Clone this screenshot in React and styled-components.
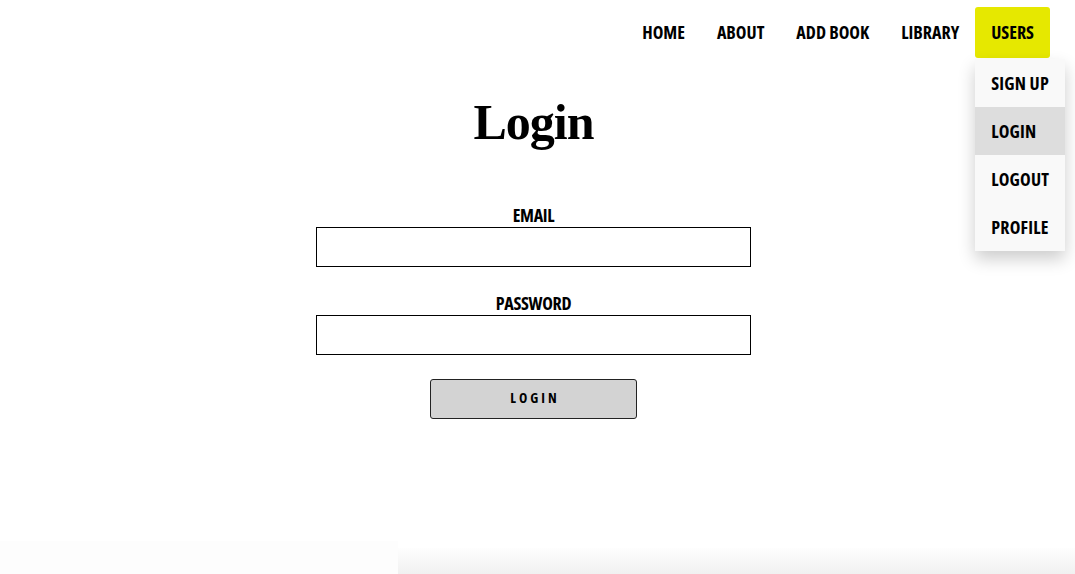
import React from "react";
import styled, { createGlobalStyle } from "styled-components";

const Global = createGlobalStyle`
  html, body { margin: 0; padding: 0; background: #ffffff; }
  body { font-family: "Open Sans", "Liberation Sans", Arial, sans-serif; color: #000; }
  * { box-sizing: border-box; }
`;

const Page = styled.div`
  min-height: 100vh;
  display: flex;
  flex-direction: column;
`;

const NavBar = styled.nav`
  display: flex;
  justify-content: flex-end;
  align-items: flex-start;
  padding: 7px 25px 0 0;
  height: 58px;
`;

const NavLink = styled.a`
  display: block;
  height: 51px;
  line-height: 51px;
  padding: 0 16px;
  font-family: "Open Sans", "Liberation Sans", sans-serif;
  font-stretch: 75%;
  font-weight: 700;
  font-size: 18px;
  letter-spacing: 0;
  color: #000;
  text-decoration: none;
  text-transform: uppercase;
  border-radius: 3px;
  background: ${(p) => (p.$active ? "#e6e800" : "transparent")};
`;

const DropWrap = styled.div`
  position: relative;
`;

const Dropdown = styled.div`
  position: absolute;
  top: 52px;
  left: 0;
  width: 90px;
  background: #f9f9f9;
  box-shadow: 0 8px 16px rgba(0, 0, 0, 0.2);
  z-index: 2;
`;

const DropItem = styled.a`
  display: block;
  height: 48px;
  line-height: 48px;
  padding: 0 16px;
  font-family: "Open Sans", "Liberation Sans", sans-serif;
  font-stretch: 75%;
  font-weight: 700;
  font-size: 18px;
  letter-spacing: 0.2px;
  color: #000;
  text-decoration: none;
  white-space: nowrap;
  background: ${(p) => (p.$hover ? "#dddddd" : "transparent")};
`;

const Main = styled.main`
  flex: 1;
  display: flex;
  flex-direction: column;
  align-items: center;
  padding-right: 8px;
`;

const Title = styled.h1`
  margin: 38px 0 0;
  font-family: "Liberation Serif", "Times New Roman", serif;
  font-weight: 700;
  font-size: 50px;
  line-height: 52px;
  letter-spacing: -1px;
`;

const Form = styled.form`
  display: flex;
  flex-direction: column;
  align-items: center;
  margin-top: 57px;
  width: 435px;
`;

const Field = styled.div`
  display: flex;
  flex-direction: column;
  align-items: center;
  width: 100%;
  margin-bottom: ${(p) => p.$mb}px;
`;

const Label = styled.label`
  font-family: "Open Sans", "Liberation Sans", sans-serif;
  font-stretch: 75%;
  font-weight: 700;
  font-size: 18px;
  letter-spacing: -0.3px;
  line-height: 20px;
  height: 20px;
  margin-bottom: 2px;
`;

const Input = styled.input`
  width: 435px;
  height: 40px;
  border: 1px solid #000;
  border-radius: 0;
  background: #fff;
  padding: 0 8px;
  font-size: 16px;
  outline: none;
`;

const Button = styled.button`
  width: 207px;
  height: 40px;
  background: #d3d3d3;
  border: 1px solid #222;
  border-radius: 3px;
  font-family: "Open Sans", "Liberation Sans", sans-serif;
  font-stretch: 75%;
  font-weight: 700;
  font-size: 14px;
  line-height: 36px;
  letter-spacing: 3px;
  padding: 0 0 2px 3px;
  color: #000;
  cursor: pointer;
`;

const Footer = styled.footer`
  display: flex;
  align-items: flex-end;
  height: 33px;
`;

const FooterLeft = styled.div`
  width: 398px;
  height: 33px;
  background: #fdfdfd;
`;

const FooterRight = styled.div`
  flex: 1;
  height: 26px;
  background: linear-gradient(#fefefe, #f1f1f1);
`;

export default function App() {
  return (
    <Page>
      <Global />
      <NavBar>
        <NavLink href="#">Home</NavLink>
        <NavLink href="#">About</NavLink>
        <NavLink href="#">Add Book</NavLink>
        <NavLink href="#">Library</NavLink>
        <DropWrap>
          <NavLink href="#" $active>Users</NavLink>
          <Dropdown>
            <DropItem href="#">SIGN UP</DropItem>
            <DropItem href="#" $hover>LOGIN</DropItem>
            <DropItem href="#">LOGOUT</DropItem>
            <DropItem href="#">PROFILE</DropItem>
          </Dropdown>
        </DropWrap>
      </NavBar>
      <Main>
        <Title>Login</Title>
        <Form onSubmit={(e) => e.preventDefault()}>
          <Field $mb={26}>
            <Label htmlFor="email">EMAIL</Label>
            <Input id="email" type="email" />
          </Field>
          <Field $mb={24}>
            <Label htmlFor="password">PASSWORD</Label>
            <Input id="password" type="password" />
          </Field>
          <Button type="submit">LOGIN</Button>
        </Form>
      </Main>
      <Footer>
        <FooterLeft />
        <FooterRight />
      </Footer>
    </Page>
  );
}
